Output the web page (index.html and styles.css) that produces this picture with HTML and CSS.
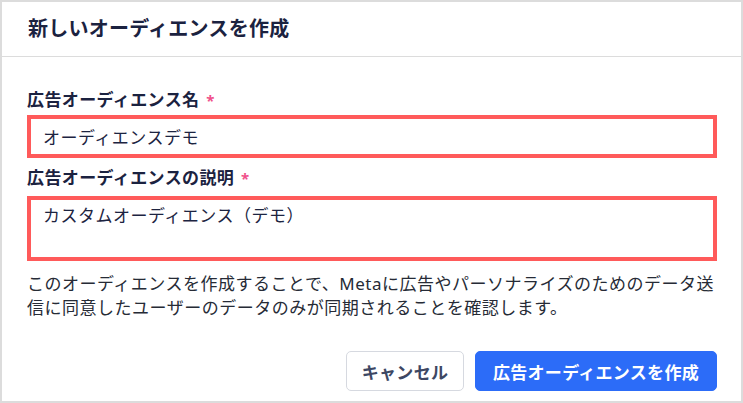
FILE: index.html
```html
<!DOCTYPE html>
<html lang="ja">
<head>
<meta charset="utf-8">
<link rel="stylesheet" href="styles.css">
</head>
<body>
<div class="dialog">
  <div class="header">
    <h1 class="title">新しいオーディエンスを作成</h1>
  </div>
  <div class="content">
    <label class="label">広告オーディエンス名 <span class="req">*</span></label>
    <input class="field" type="text" value="オーディエンスデモ">
    <label class="label label-2">広告オーディエンスの説明 <span class="req">*</span></label>
    <textarea class="field area">カスタムオーディエンス（デモ）</textarea>
    <p class="note">このオーディエンスを作成することで、Metaに広告やパーソナライズのためのデータ送信に同意したユーザーのデータのみが同期されることを確認します。</p>
    <div class="actions">
      <button class="btn btn-cancel">キャンセル</button>
      <button class="btn btn-primary">広告オーディエンスを作成</button>
    </div>
  </div>
</div>
</body>
</html>
```
FILE: styles.css
```css
html, body {
  margin: 0;
  padding: 0;
  background: #ffffff;
}
body {
  font-family: "Noto Sans", "Noto Sans CJK JP", sans-serif;
  color: #1d2441;
}
.dialog {
  width: 743px;
  height: 403px;
  box-sizing: border-box;
  border: 2px solid #dcdcdc;
  background: #fff;
  display: flex;
  flex-direction: column;
}
.header {
  height: 55px;
  box-sizing: border-box;
  border-bottom: 1px solid #dcdcdc;
  padding: 0 26px;
  display: flex;
  align-items: center;
}
.title {
  margin: 0;
  font-size: 20px;
  font-weight: 700;
  line-height: 26px;
  letter-spacing: 0.25px;
  color: #1b2240;
}
.content {
  flex: 1;
  padding: 31px 24px 0 25px;
  display: flex;
  flex-direction: column;
}
.label {
  display: block;
  font-size: 17px;
  font-weight: 700;
  line-height: 24px;
  letter-spacing: 0.4px;
  color: #1b2240;
  margin-bottom: 3px;
}
.label-2 {
  margin-top: 8px;
  margin-bottom: 6px;
}
.req {
  color: #f0508a;
  font-weight: 700;
  font-size: 15px;
  margin-left: 2px;
}
.field {
  display: block;
  width: 100%;
  height: 43px;
  box-sizing: border-box;
  border: 4px solid #ff5a5a;
  border-radius: 0;
  outline: none;
  padding: 0 12px;
  font-family: "Noto Sans", "Noto Sans CJK JP", sans-serif;
  font-size: 17px;
  letter-spacing: 0.5px;
  color: #1d2441;
  background: #fff;
  margin: 0;
}
.area {
  height: 65px;
  padding: 4px 12px 0;
  line-height: 24px;
  resize: none;
  overflow: hidden;
}
.note {
  margin: 11px 0 0;
  font-size: 17px;
  line-height: 23.5px;
  letter-spacing: 0.5px;
  color: #262b36;
}
.actions {
  margin-top: auto;
  padding-bottom: 10px;
  display: flex;
  justify-content: flex-end;
  gap: 11px;
}
.btn {
  height: 40px;
  box-sizing: border-box;
  border-radius: 5px;
  font-family: "Noto Sans", "Noto Sans CJK JP", sans-serif;
  font-size: 17px;
  font-weight: 700;
  letter-spacing: 0.3px;
  padding: 0 8px;
  cursor: pointer;
}
.btn-cancel {
  width: 118px;
  background: #fff;
  border: 1px solid #d6d9e0;
  color: #3d4763;
}
.btn-primary {
  width: 242px;
  background: #2c6cf8;
  border: 1px solid #2c6cf8;
  color: #fff;
}
```
